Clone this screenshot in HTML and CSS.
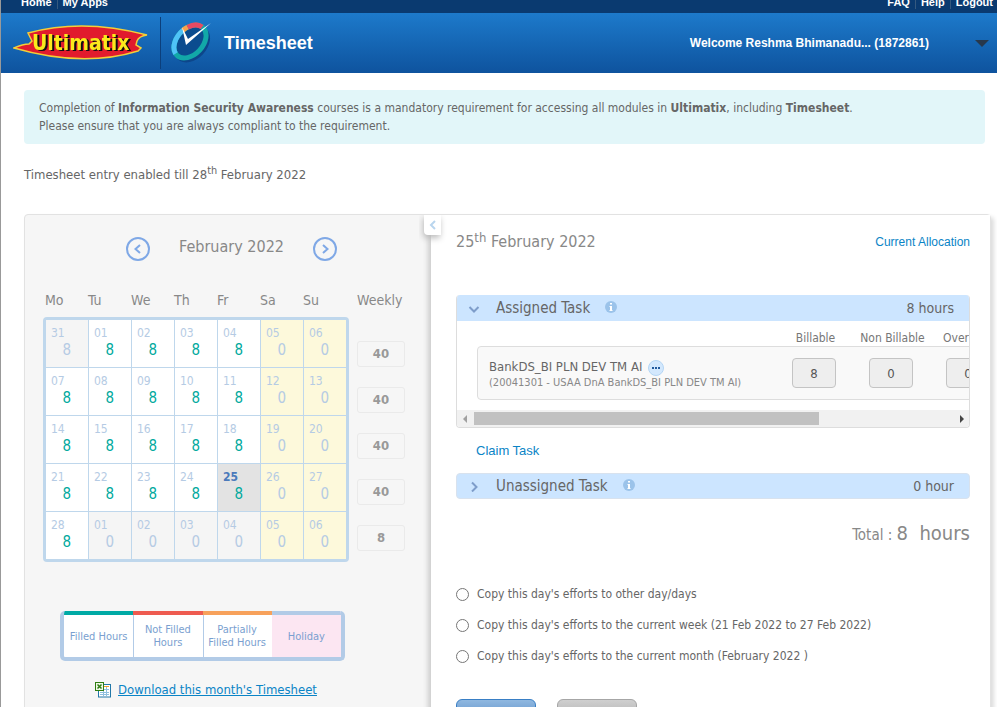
FILE: index.html
```
<!DOCTYPE html>
<html lang="en">
<head>
<meta charset="utf-8">
<title>Timesheet</title>
<link rel="stylesheet" href="styles.css">
</head>
<body>
<div class="page">
  <nav class="topbar">
    <div class="topbar-links"><a href="#">Home</a><a href="#">My Apps</a></div>
    <div class="topbar-links"><a href="#">FAQ</a><a href="#">Help</a><a href="#">Logout</a></div>
  </nav>

  <header class="header">
    <svg class="logo" viewBox="0 0 138 38" width="138" height="38" role="img" aria-label="Ultimatix">
      <path d="M1 24 Q10 20 16 20 L19 17 L15 9 Q70 -6 134 11 Q126 12 124 17 L123 21 L128 24 L125 27 Q70 44 1 24Z" fill="#e11b2d" stroke="#f3cf38" stroke-width="1.500"/>
      <text class="logo-text" x="19" y="26" fill="#fbe91c">Ultimatix</text>
    </svg>
    <div class="brand">
      <svg viewBox="0 0 42 42" width="42" height="42" aria-hidden="true">
        <ellipse cx="22" cy="22" rx="15" ry="21" transform="rotate(43 22 22)" fill="#0d468a"/>
        <g transform="translate(20 19.500) rotate(43)" fill="none" stroke-width="5">
          <ellipse rx="13" ry="19" fill="#0b4c8f" stroke="#12a8a8"/>
          <path d="M-2.300 18.700 A13 19 0 0 1 -12.800 -3.300" stroke="#4fc3f7"/>
          <path d="M-12.800 -3.300 A13 19 0 0 1 -11.500 -8.900" stroke="#f9a24c"/>
          <path d="M-11.500 -8.900 A13 19 0 0 1 -1.100 -18.900" stroke="#e84a63"/>
        </g>
        <path d="M12 5 L18 17 L41 1 L16 23Z" fill="#fff"/>
      </svg>
      <h1>Timesheet</h1>
    </div>
    <button class="user-menu" type="button">Welcome Reshma Bhimanadu... (1872861)<span class="caret"></span></button>
  </header>

  <main class="main">
    <p class="notice">Completion of <b>Information Security Awareness</b> courses is a mandatory requirement for accessing all modules in <b>Ultimatix</b>, including <b>Timesheet</b>.<br>Please ensure that you are always compliant to the requirement.</p>
    <p class="enabled">Timesheet entry enabled till 28<sup>th</sup> February 2022</p>

    <div class="board">
      <section class="month">
        <div class="month-nav">
          <button class="round" type="button" aria-label="Previous month"><svg viewBox="0 0 24 24" width="24" height="24"><circle cx="12" cy="12" r="11"/><path d="M14 8 L9.500 12 L14 16"/></svg></button>
          <h2>February 2022</h2>
          <button class="round" type="button" aria-label="Next month"><svg viewBox="0 0 24 24" width="24" height="24"><circle cx="12" cy="12" r="11"/><path d="M10 8 L14.500 12 L10 16"/></svg></button>
        </div>
        <div class="calendar">
          <div class="day-names"><span>Mo</span><span>Tu</span><span>We</span><span>Th</span><span>Fr</span><span>Sa</span><span>Su</span></div>
          <div class="week-name">Weekly</div>
          <table class="days">
            <tr><td class="out">31<i>8</i></td><td>01<i>8</i></td><td>02<i>8</i></td><td>03<i>8</i></td><td>04<i>8</i></td><td class="off">05<i>0</i></td><td class="off">06<i>0</i></td></tr>
            <tr><td>07<i>8</i></td><td>08<i>8</i></td><td>09<i>8</i></td><td>10<i>8</i></td><td>11<i>8</i></td><td class="off">12<i>0</i></td><td class="off">13<i>0</i></td></tr>
            <tr><td>14<i>8</i></td><td>15<i>8</i></td><td>16<i>8</i></td><td>17<i>8</i></td><td>18<i>8</i></td><td class="off">19<i>0</i></td><td class="off">20<i>0</i></td></tr>
            <tr><td>21<i>8</i></td><td>22<i>8</i></td><td>23<i>8</i></td><td>24<i>8</i></td><td class="current"><b>25</b><i>8</i></td><td class="off">26<i>0</i></td><td class="off">27<i>0</i></td></tr>
            <tr><td>28<i>8</i></td><td class="out">01<i>0</i></td><td class="out">02<i>0</i></td><td class="out">03<i>0</i></td><td class="out">04<i>0</i></td><td class="off">05<i>0</i></td><td class="off">06<i>0</i></td></tr>
          </table>
          <div class="weeks"><span>40</span><span>40</span><span>40</span><span>40</span><span>8</span></div>
        </div>
        <div class="legend">
          <span class="filled">Filled Hours</span><span class="missing">Not Filled Hours</span><span class="partial">Partially Filled Hours</span><span class="holiday">Holiday</span>
        </div>
        <a class="download" href="#">
          <svg viewBox="0 0 16 16" width="16" height="16" aria-hidden="true"><rect x="3.500" y="2.500" width="12" height="12.500" fill="#fff" stroke="#2277a8"/><path d="M9 4.500h5" stroke="#f0a030"/><path d="M5 7.500h9M5 10.500h9M5 12.500h9M8.500 5v9M11.500 5v9" stroke="#8fbfdf"/><rect x=".5" y=".5" width="8" height="8" fill="#eef8e4" stroke="#2f7d12"/><path d="M2.500 2.500l4 4M6.500 2.500l-4 4" stroke="#2f7d12" stroke-width="1.500"/></svg><span>Download this month's Timesheet</span>
        </a>
      </section>

      <section class="day">
        <button class="fold" type="button" aria-label="Collapse calendar"><svg viewBox="0 0 8 10" width="8" height="10"><path d="M6 1 L2 5 L6 9" fill="none" stroke="#b9d5ee" stroke-width="2"/></svg></button>
        <div class="day-head"><h2>25<sup>th</sup> February 2022</h2><a href="#">Current Allocation</a></div>

        <div class="assigned">
          <div class="bar">
            <svg class="chev" viewBox="0 0 12 12" width="12" height="12"><path d="M1.500 5 L6 9.500 L10.500 5"/></svg>
            <h3>Assigned Task</h3>
            <svg class="info" viewBox="0 0 12 12" width="12" height="12"><circle cx="6" cy="6" r="6"/><path d="M5 2h2v1.500H5zM4.500 5H7v4h.5v1h-3V9H5V6h-.5z"/></svg>
            <span>8 hours</span>
          </div>
          <div class="columns"><label for="b">Billable</label><label for="n">Non Billable</label><label for="o">Over Time</label></div>
          <div class="task">
            <div class="task-name">
              <div class="task-title">BankDS_BI PLN DEV TM AI <button class="more" type="button" aria-label="More"><svg viewBox="0 0 16 16" width="16" height="16"><circle cx="8" cy="8" r="7.500" fill="#d3e8fd" stroke="#b4d5f4"/><path d="M4 7h2v2H4zM7 7h2v2H7zM10 7h2v2h-2z" fill="#215a9e"/></svg></button></div>
              <small>(20041301 - USAA DnA BankDS_BI PLN DEV TM AI)</small>
            </div>
            <input id="b" value="8"><input id="n" value="0"><input id="o" value="0">
          </div>
          <div class="scroll"><i class="prev"></i><i class="thumb"></i><i class="next"></i></div>
        </div>

        <a class="claim" href="#">Claim Task</a>

        <div class="bar alone">
          <svg class="chev" viewBox="0 0 12 12" width="12" height="12"><path d="M4 2.500 L8.500 7 L4 11.500"/></svg>
          <h3>Unassigned Task</h3>
          <svg class="info" viewBox="0 0 12 12" width="12" height="12"><circle cx="6" cy="6" r="6"/><path d="M5 2h2v1.500H5zM4.500 5H7v4h.5v1h-3V9H5V6h-.5z"/></svg>
          <span>0 hour</span>
        </div>
        <p class="total">Total : <strong>8 &nbsp;hours</strong></p>

        <div class="copy">
          <label><input type="radio" name="copy">Copy this day's efforts to other day/days</label>
          <label><input type="radio" name="copy">Copy this day's efforts to the current week (21 Feb 2022 to 27 Feb 2022)</label>
          <label><input type="radio" name="copy">Copy this day's efforts to the current month (February 2022 )</label>
        </div>
        <div class="actions"><button class="primary" type="button" aria-label="Submit"></button><button type="button" aria-label="Cancel"></button></div>
      </section>
    </div>
  </main>
</div>
</body>
</html>
```
FILE: styles.css
```
* { box-sizing: border-box; }
body, h1, h2, h3, p { margin: 0; font-weight: normal; }
body {
  font: 12px/18px "DejaVu Sans Condensed", "DejaVu Sans", sans-serif;
  color: #666;
  background: #fff;
}
button { font: inherit; padding: 0; border: 0; background: none; cursor: pointer; }
a { color: #0a84c6; text-decoration: none; }
svg { display: block; flex: none; }

.page { height: 100vh; overflow: hidden; border-left: 1px solid #999; }

.topbar {
  display: flex; justify-content: space-between; align-items: flex-end;
  height: 13px; padding: 0 4px 4px 20px; overflow: hidden;
  background: #0a3a70;
  font: bold 11px/14px "Liberation Sans", Arial, sans-serif;
}
.topbar-links { display: flex; }
.topbar a { color: #fff; }
.topbar a + a { margin-left: 5px; padding-left: 5px; border-left: 1px solid #35597f; }

.header {
  display: flex; align-items: center; height: 60px; padding: 0 8px 0 12px;
  background: linear-gradient(#1d7acb, #0e539e);
  color: #fff;
  font: bold 12px/18px "Liberation Sans", Arial, sans-serif;
}
.logo-text { font: bold 21px "DejaVu Sans Condensed", "DejaVu Sans", sans-serif; filter: drop-shadow(2px 1px 0 #111); }
.brand {
  display: flex; align-items: center; gap: 12px; flex: 1; height: 52px;
  margin-left: 9px; padding-left: 9px; border-left: 1px solid #0c3f7b;
}
.brand h1 { font-size: 18px; font-weight: bold; }
.user-menu { display: flex; align-items: center; gap: 46px; color: #fff; }
.caret { border: 7px solid transparent; border-top-color: #27384c; border-bottom: 0; }

.main { padding: 17px 6px 0 23px; }
.notice { margin-right: 6px; padding: 9px 15px; border-radius: 4px; background: #e2f6f9; }
.enabled { margin: 20px 0 28px; font-size: 13px; line-height: 22px; }
.enabled sup { line-height: 0; vertical-align: 5px; }

.board {
  display: flex; min-height: 560px;
  border: 1px solid #e2e2e2; border-radius: 4px; background: #f6f6f6;
  box-shadow: 3px 3px 4px #ddd;
}
.month { width: 406px; flex: none; padding: 17px 19px 0 18px; color: #888; }
.month-nav { display: flex; align-items: center; justify-content: center; gap: 29px; width: 377px; }
.month-nav h2 { font-size: 16px; line-height: 24px; }
.round { margin-top: 5px; }
.round svg { fill: none; stroke: #7fa8e6; stroke-width: 2; }

.calendar { display: grid; grid-template-columns: 306px 48px; column-gap: 8px; margin-top: 27px; }
.day-names { display: grid; grid-template-columns: repeat(7, 43px); padding-left: 2px; font-size: 14px; line-height: 24px; }
.week-name { font-size: 14px; line-height: 24px; }
.days {
  table-layout: fixed; width: 306px; margin-top: 5px; border: 2px solid #bfd7ec; border-radius: 4px;
  border-spacing: 1px; background: #bfd7ec;
}
.days td { height: 47px; padding: 5px 5px 0; background: #fff; color: #b5cbe4; line-height: 17px; vertical-align: top; }
.days i { display: block; padding-right: 12px; color: #00a99d; font-size: 15px; font-style: normal; line-height: 16px; text-align: right; }
.days .out { background: #f5f5f5; }
.days .off { background: #fdf9db; }
.days .out i, .days .off i { color: #b5cbe4; }
.days .current { background: #e3e3e3; }
.days b { color: #4b7abb; }
.weeks { display: flex; flex-direction: column; gap: 20px; padding-top: 29px; }
.weeks span { height: 26px; border: 1px solid #eaeaea; border-radius: 3px; font-size: 13px; font-weight: bold; line-height: 24px; text-align: center; color: #999; }

.legend {
  display: grid; grid-template-columns: repeat(4, 1fr); width: 285px; height: 50px; margin: 49px 0 0 17px;
  border: 4px solid #b2cbe7; border-top: 0; border-radius: 5px; overflow: hidden;
  background: #fff; color: #7a9fd0; font-size: 11px; line-height: 13px; text-align: center;
}
.legend span { display: grid; place-items: center; padding: 0 3px; border-top: 4px solid #b2cbe7; }
.legend .filled { border-color: #00aaa5; }
.legend .missing { border-color: #ee5b50; }
.legend .partial { border-color: #f7a15b; }
.legend span + span { background: linear-gradient(#b2cbe7, #b2cbe7) left / 1px 100% no-repeat; }
.legend .holiday, .legend span + .holiday { background: #fce6f2; }
.download { display: flex; gap: 7px; align-items: center; margin: 20px 0 0 52px; font-size: 13px; line-height: 18px; }
.download span { text-decoration: underline; }

.day {
  position: relative; flex: 1; min-width: 0; padding: 12px 20px 0 25px;
  background: #fff; box-shadow: -3px 0 5px #ccc; clip-path: inset(0 0 0 -12px);
}
.fold {
  position: absolute; left: -7px; top: 0; width: 17px; height: 20px;
  display: grid; place-items: center; border-radius: 0 0 0 4px; background: #fff; box-shadow: -1px 3px 6px #bbb;
}
.day-head { display: flex; align-items: center; justify-content: space-between; }
.day-head h2 { font-size: 16px; line-height: 30px; color: #888; }
.day-head sup { font-size: 13px; line-height: 0; vertical-align: 5px; }
.day-head a, .claim { font-family: "Liberation Sans", Arial, sans-serif; }

.assigned { margin-top: 38px; border: 1px solid #ddd; border-top: 0; border-radius: 4px; overflow: hidden; }
.bar { display: flex; align-items: center; height: 26px; padding: 0 15px 0 11px; background: #cce5ff; }
.bar h3 { margin: 0 15px 0 16px; font-size: 15px; line-height: 24px; }
.bar span { margin-left: auto; font-size: 14px; }
.chev { fill: none; stroke: #7e9dca; stroke-width: 2; }
.info { margin-bottom: 3px; fill: #9bc3ea; }
.info path { fill: #fff; }
.columns { display: grid; grid-template-columns: repeat(3, 77px); margin: 9px 0 0 320px; text-align: center; white-space: nowrap; line-height: 16px; color: #777; }
.columns label:last-child { text-align: left; padding-left: 12px; }
.task {
  display: flex; align-items: center; gap: 33px; width: 620px; height: 54px; margin-left: 20px; padding-left: 11px;
  border: 1px solid #ddd; border-radius: 4px; background: #f9f9f9;
}
.task-name { width: 270px; flex: none; line-height: 17px; white-space: nowrap; }
.task-title { display: flex; align-items: center; gap: 6px; font-size: 13px; }
.more { margin-top: 3px; }
.task small { display: block; font-size: 11px; line-height: 14px; color: #888; }
.task input {
  width: 44px; height: 30px; flex: none; padding: 0; border: 1px solid #c4c4c4; border-radius: 4px; background: #eee;
  color: #555; font: inherit; font-size: 13px; text-align: center;
}
.scroll { display: flex; align-items: center; height: 17px; margin-top: 10px; padding: 0 5px; background: #f1f1f1; }
.prev, .next { border: 4px solid transparent; }
.prev { border-left: 0; border-right-color: #a0a0a0; margin-left: 1px; }
.next { border-right: 0; border-left-color: #444; margin-left: auto; }
.thumb { width: 345px; height: 13px; margin-left: 7px; background: #c1c1c1; }
.claim { display: block; margin: 14px 0 13px 20px; font-size: 13px; line-height: 18px; }
.bar.alone { border: 1px solid #d8e2ee; border-radius: 4px; }
.total { margin-top: 19px; font-size: 15px; line-height: 30px; text-align: right; color: #888; }
.total strong { font-size: 20px; font-weight: normal; }

.copy { display: grid; gap: 13px; margin-top: 35px; }
.copy label { display: flex; align-items: center; gap: 8px; line-height: 18px; }
.copy input { width: 13px; height: 13px; margin: 1px 0 0; }
.actions { display: flex; gap: 21px; margin-top: 34px; }
.actions button { width: 80px; height: 26px; border: 1px solid #a6a6a6; border-radius: 6px; background: linear-gradient(#cfcfcf, #aaa); }
.actions .primary { border-color: #397fc5; background: linear-gradient(#90b8e0, #5288c4); }
```
